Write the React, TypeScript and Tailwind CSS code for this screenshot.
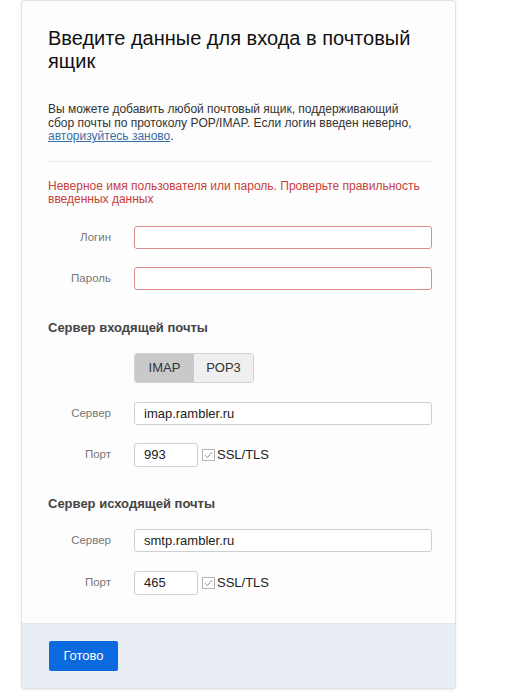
import { useState } from 'react'

function Field({ label, value, error, wide = true }: { label: string; value?: string; error?: boolean; wide?: boolean }) {
  return (
    <div className="flex items-center">
      <div className="w-[86px] pr-[23px] text-right text-[11.5px] text-[#777]">{label}</div>
      <input
        readOnly
        value={value ?? ''}
        className={
          (wide ? 'w-[298px] h-[23px] ' : 'w-[64px] h-[24px] ') +
          'rounded-[3px] border bg-white px-[9px] text-[13px] text-[#222] outline-none ' +
          (error ? 'border-[#e08c8c]' : 'border-[#cfcfcf]')
        }
      />
    </div>
  )
}

function PortRow({ value }: { value: string }) {
  return (
    <div className="flex items-center">
      <Field label="Порт" value={value} wide={false} />
      <div className="ml-[4px] flex items-center">
        <span className="flex h-[12px] w-[13px] items-center justify-center border border-[#b5b5b5] bg-white">
          <svg width="9" height="8" viewBox="0 0 9 8">
            <path d="M1 4.2 L3.4 6.6 L8 1.2" fill="none" stroke="#8a8a8a" strokeWidth="1" />
          </svg>
        </span>
        <span className="ml-[2px] text-[13px] text-[#222]">SSL/TLS</span>
      </div>
    </div>
  )
}

export default function App() {
  const [proto, setProto] = useState<'imap' | 'pop3'>('imap')

  return (
    <div className="min-h-screen bg-white pl-[21px]" style={{ fontFamily: '"Liberation Sans", Arial, sans-serif' }}>
      <div className="w-[435px] overflow-hidden rounded-[3px] border border-[#e2e2e2] bg-[#fdfdfd] shadow-[0_1px_3px_rgba(0,0,0,0.08)]">
        <div className="pl-[26px] pr-[22px] pt-[26px] pb-[28px]">
          <h1 className="text-[20px] leading-[23px] text-[#111]">Введите данные для входа в почтовый ящик</h1>
          <p className="mt-[30px] w-[376px] text-[12px] leading-[13.6px] text-[#333]">
            Вы можете добавить любой почтовый ящик, поддерживающий сбор почты по протоколу POP/IMAP. Если логин введен неверно,{' '}
            <a href="#" className="text-[#3a6ea8] underline">авторизуйтесь заново</a>.
          </p>
          <div className="mt-[17px] h-px bg-[#ececec]" />
          <p className="mt-[18px] text-[12px] leading-[13.6px] text-[#c8403c]">
            Неверное имя пользователя или пароль. Проверьте правильность введенных данных
          </p>
          <div className="mt-[19px] flex flex-col gap-[18px]">
            <Field label="Логин" error />
            <Field label="Пароль" error />
          </div>

          <h2 className="mt-[30px] text-[13px] font-bold leading-[15px] text-[#444]">Сервер входящей почты</h2>
          <div className="mt-[18px] flex pl-[86px]">
            <div className="flex h-[30px] overflow-hidden rounded-[3px] border border-[#d2d2d2] text-[13px] text-[#333]">
              <button
                onClick={() => setProto('imap')}
                className={'w-[59px] ' + (proto === 'imap' ? 'bg-[#c9c9c9]' : 'bg-[#efefef]')}
              >
                IMAP
              </button>
              <button
                onClick={() => setProto('pop3')}
                className={'w-[59px] ' + (proto === 'pop3' ? 'bg-[#c9c9c9]' : 'bg-[#efefef]')}
              >
                POP3
              </button>
            </div>
          </div>
          <div className="mt-[19px] flex flex-col gap-[18px]">
            <Field label="Сервер" value="imap.rambler.ru" />
            <PortRow value="993" />
          </div>

          <h2 className="mt-[29px] text-[13px] font-bold leading-[15px] text-[#444]">Сервер исходящей почты</h2>
          <div className="mt-[18px] flex flex-col gap-[19px]">
            <Field label="Сервер" value="smtp.rambler.ru" />
            <PortRow value="465" />
          </div>
        </div>
        <div className="border-t border-[#e3e6ea] bg-[#e9eef4] pl-[27px] pt-[17px] pb-[17px]">
          <button className="h-[30px] w-[69px] rounded-[2px] bg-[#0b6ae0] text-[13px] text-white">Готово</button>
        </div>
      </div>
    </div>
  )
}
